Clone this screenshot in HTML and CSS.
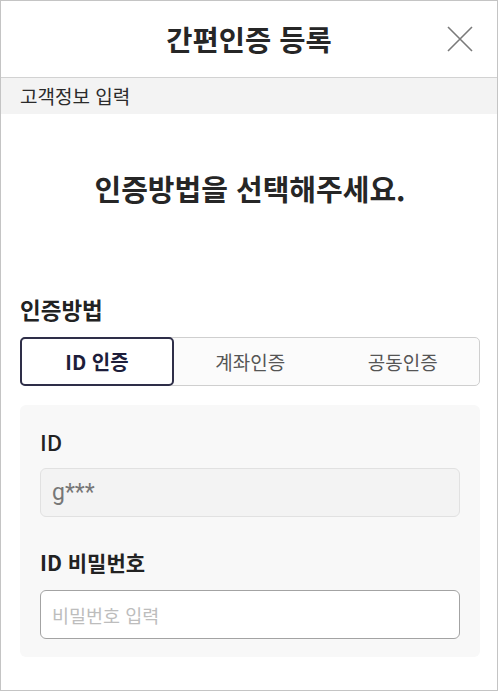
FILE: index.html
```html
<!DOCTYPE html>
<html lang="ko">
<head>
<meta charset="utf-8">
<title>간편인증 등록</title>
<link rel="stylesheet" href="styles.css">
</head>
<body>
<div class="frame">
  <header class="header">
    <h1 class="title">간편인증 등록</h1>
    <button class="close" aria-label="닫기">
      <svg width="26" height="26" viewBox="0 0 26 26"><path d="M1 1 L25 25 M25 1 L1 25" stroke="#7a7a7a" stroke-width="1.6" fill="none"/></svg>
    </button>
  </header>
  <div class="band">고객정보 입력</div>
  <main class="content">
    <h2 class="heading">인증방법을 선택해주세요.</h2>
    <div class="label">인증방법</div>
    <div class="tabs">
      <div class="tab active">ID 인증</div>
      <div class="tab">계좌인증</div>
      <div class="tab">공동인증</div>
    </div>
    <section class="box">
      <div class="field-label light">ID</div>
      <div class="input filled">g***</div>
      <div class="field-label">ID 비밀번호</div>
      <div class="input empty">비밀번호 입력</div>
    </section>
  </main>
</div>
</body>
</html>
```
FILE: styles.css
```css
* { box-sizing: border-box; }
html, body { margin: 0; padding: 0; background: #fff; }
body {
  font-family: "Noto Sans CJK KR", "Noto Sans", sans-serif;
  color: #222;
}
.frame {
  width: 498px;
  height: 691px;
  border: 1px solid #c4c4c4;
  overflow: hidden;
}
.header {
  position: relative;
  height: 77px;
  border-bottom: 1px solid #d2d2d2;
  display: flex;
  align-items: center;
  justify-content: center;
}
.title {
  margin: 0;
  font-size: 28.5px;
  font-weight: 700;
  line-height: 36px;
  color: #262626;
}
.close {
  position: absolute;
  right: 24px;
  top: 25px;
  width: 26px;
  height: 26px;
  padding: 0;
  border: 0;
  background: none;
  display: block;
}
.close svg { display: block; }
.band {
  height: 36px;
  line-height: 36px;
  background: #f3f3f3;
  padding-left: 19px;
  font-size: 19px;
  color: #2a2a2a;
}
.content {
  padding: 0 17px 0 19px;
}
.heading {
  margin: 56px 0 0;
  text-align: center;
  font-size: 29px;
  font-weight: 700;
  line-height: 36px;
  color: #262626;
}
.label {
  margin-top: 89px;
  font-size: 22.5px;
  font-weight: 700;
  line-height: 28px;
  color: #222;
}
.tabs {
  margin-top: 14px;
  height: 49px;
  display: grid;
  grid-template-columns: 153px 1fr 1fr;
  border: 1px solid #cfcfcf;
  border-radius: 5px;
  background: #fbfbfb;
}
.tab {
  display: flex;
  align-items: center;
  justify-content: center;
  font-size: 19px;
  color: #555;
}
.tab.active {
  margin: -1px 0 -1px -1px;
  border: 2px solid #2e2e48;
  border-radius: 5px;
  background: #fff;
  color: #1d1d3a;
  font-weight: 700;
  font-size: 20px;
}
.box {
  margin-top: 19px;
  background: #f8f8f8;
  border-radius: 6px;
  padding: 21px 20px 18px;
}
.field-label {
  font-size: 21px;
  font-weight: 700;
  line-height: 30px;
  color: #222;
}
.field-label.light { font-weight: 500; font-size: 22px; }
.input {
  margin-top: 12px;
  height: 49px;
  border-radius: 6px;
  padding: 0 11px;
  display: flex;
  align-items: center;
}
.input.filled {
  background: #f3f3f3;
  border: 1px solid #e1e1e1;
  font-family: Roboto, "Noto Sans", sans-serif;
  font-size: 23px;
  color: #777;
  margin-bottom: 30px;
}
.input.empty {
  margin-top: 13px;
  background: #fff;
  border: 1px solid #a3a3a3;
  font-size: 18.5px;
  color: #bdbdbd;
}
```
